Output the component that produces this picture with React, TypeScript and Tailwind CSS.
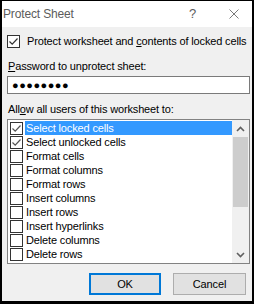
import React from 'react';

const FONT = { fontFamily: '"Liberation Sans", Arial, sans-serif' };

const PERMS: { label: string; checked: boolean }[] = [
  { label: 'Select locked cells', checked: true },
  { label: 'Select unlocked cells', checked: true },
  { label: 'Format cells', checked: false },
  { label: 'Format columns', checked: false },
  { label: 'Format rows', checked: false },
  { label: 'Insert columns', checked: false },
  { label: 'Insert rows', checked: false },
  { label: 'Insert hyperlinks', checked: false },
  { label: 'Delete columns', checked: false },
  { label: 'Delete rows', checked: false },
];

const CheckBox: React.FC<{ checked: boolean; dim?: boolean }> = ({ checked, dim }) => (
  <div className="w-[13px] h-[13px] shrink-0 border border-[#333333] bg-white flex items-center justify-center">
    {checked && (
      <svg width="11" height="11" viewBox="0 0 11 11">
        <path d="M1.5 5.5 L4.2 8.2 L9.5 2.5" fill="none" stroke={dim ? '#555555' : '#333333'} strokeWidth="1.2" />
      </svg>
    )}
  </div>
);

const Chevron: React.FC<{ up?: boolean }> = ({ up }) => (
  <svg width="9" height="6" viewBox="0 0 9 6">
    <path d={up ? 'M1 5 L4.5 1.5 L8 5' : 'M1 1 L4.5 4.5 L8 1'} fill="none" stroke="#606060" strokeWidth="1.6" />
  </svg>
);

export default function App() {
  return (
    <div className="w-[254px] h-[304px] bg-black pt-px pl-[2px]" style={FONT}>
      <div className="w-[250px] h-[300px] bg-[#f0f0f0] flex flex-col text-[11px] tracking-[-0.15px] text-black">
        {/* title bar */}
        <div className="h-[26px] bg-white flex items-center pl-px text-[12px]">
          <span className="text-[#5c5c5c]">Protect Sheet</span>
          <span className="ml-auto mr-[33px] text-[#5c5c5c] text-[13px]">?</span>
          <svg width="10" height="10" viewBox="0 0 10 10" className="mr-[13px]">
            <path d="M0.5 0.5 L9.5 9.5 M9.5 0.5 L0.5 9.5" stroke="#7a7a7a" strokeWidth="1" />
          </svg>
        </div>

        <div className="px-[5px] flex flex-col">
          <div className="flex items-center gap-[7px] mt-[8px] h-[13px]">
            <CheckBox checked />
            <span className="whitespace-nowrap">
              Protect worksheet and <u>c</u>ontents of locked cells
            </span>
          </div>

          <div className="mt-[11px] leading-[14px] pl-[1px]">
            <u>P</u>assword to unprotect sheet:
          </div>
          <div className="mt-[3px] h-[18px] w-[243px] bg-white border border-[#7a7a7a] flex items-center pl-[4px] text-[11px] tracking-[0.5px] leading-none">
            ●●●●●●●●
          </div>

          <div className="mt-[8px] leading-[14px] pl-[1px]">
            All<u>o</u>w all users of this worksheet to:
          </div>
          <div className="mt-[3px] h-[145px] w-[243px] bg-white border border-[#828282] flex">
            <div className="flex-1 flex flex-col pt-px">
              {PERMS.map((p, i) => (
                <div key={p.label} className="h-[14px] flex items-center pl-[2px]">
                  <CheckBox checked={p.checked} dim />
                  <span
                    className={
                      i === 0
                        ? 'ml-[2px] pl-px flex-1 h-[14px] leading-[14px] bg-[#3399ff] text-white'
                        : 'ml-[2px] pl-px flex-1 h-[14px] leading-[14px]'
                    }
                  >
                    {p.label}
                  </span>
                </div>
              ))}
            </div>
            <div className="w-[17px] bg-[#f0f0f0] flex flex-col">
              <div className="h-[17px] flex items-center justify-center">
                <Chevron up />
              </div>
              <div className="mx-[1px] h-[70px] bg-[#cdcdcd]" />
              <div className="flex-1" />
              <div className="h-[17px] flex items-center justify-center">
                <Chevron />
              </div>
            </div>
          </div>

          <div className="mt-[9px] flex justify-end gap-[12px] pr-[1px]">
            <button className="w-[72px] h-[22px] bg-[#e1e1e1] border-2 border-[#0078d7] flex items-center justify-center">
              OK
            </button>
            <button className="w-[73px] h-[22px] bg-[#e1e1e1] border border-[#adadad] flex items-center justify-center">
              Cancel
            </button>
          </div>
        </div>
      </div>
    </div>
  );
}
